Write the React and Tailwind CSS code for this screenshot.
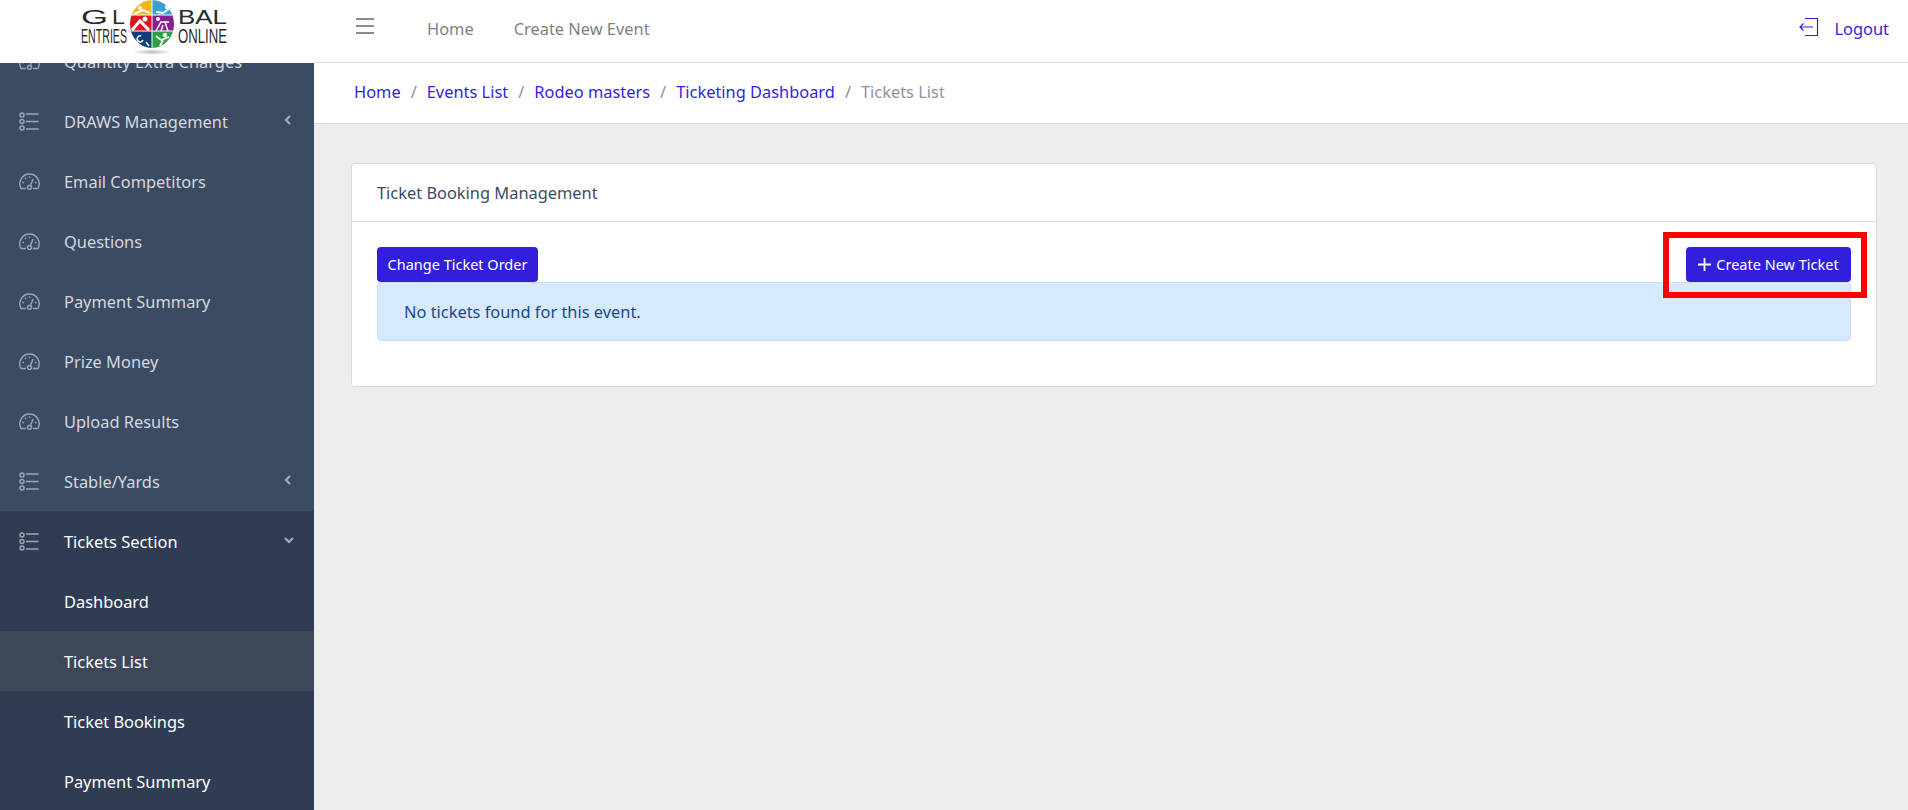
const font = "font-['Noto_Sans','Open_Sans',sans-serif]";

function ListIcon() {
  return (
    <svg width="20" height="19" viewBox="0 0 20 19" fill="none" stroke="#9da5b1" className="shrink-0">
      <circle cx="3" cy="3" r="2" strokeWidth="1.500" />
      <circle cx="3" cy="9.500" r="2" strokeWidth="1.500" />
      <circle cx="3" cy="16" r="2" strokeWidth="1.500" />
      <path d="M7 2h12.500M7 9.500h12.500M7 17h12.500" strokeWidth="1.400" />
    </svg>
  );
}

function GaugeIcon() {
  return (
    <svg width="21" height="17" viewBox="0 0 21 17" fill="none" stroke="#9da5b1" strokeWidth="1.400" className="shrink-0 mt-[1px]">
      <path d="M7 15.500H2A9.800 9.800 0 0 1 10.500 1 9.800 9.800 0 0 1 19 15.500h-5" />
      <circle cx="10.500" cy="14.500" r="2" />
      <path d="M11.500 12.500 14 6M3.500 9.500H5M6 5l1 1M10.500 3.500V5M16 9.500h1.500" />
    </svg>
  );
}

function Row({ icon, label, chevron, white, active, clip }) {
  return (
    <div className={`flex h-[60px] items-center ${active ? "bg-[#3c4758]" : ""} ${clip ? "-mt-[32px]" : ""}`}>
      <div className="flex w-[64px] pl-[19px]">{icon}</div>
      <span className={`pt-[2px] text-[16.4px] ${white ? "text-white" : "text-[#d5d8dd]"}`}>{label}</span>
      {chevron === "left" && (
        <svg width="8" height="10" viewBox="0 0 8 10" fill="none" stroke="#a9b0bb" strokeWidth="2" className="ml-auto mr-[22px] -mt-[3px]">
          <path d="M6 1 2 5l4 4" />
        </svg>
      )}
      {chevron === "down" && (
        <svg width="10" height="8" viewBox="0 0 10 8" fill="none" stroke="#a9b0bb" strokeWidth="2" className="ml-auto mr-[20px] -mt-[3px]">
          <path d="M1 2l4 4 4-4" />
        </svg>
      )}
    </div>
  );
}

function Logo() {
  return (
    <svg width="314" height="63" viewBox="0 0 314 63">
      <defs>
        <clipPath id="ball"><ellipse cx="152" cy="24" rx="22" ry="24" /></clipPath>
        <radialGradient id="shadow"><stop offset="0" stopColor="#bbb" /><stop offset="1" stopColor="#fff" /></radialGradient>
      </defs>
      <ellipse cx="152" cy="52" rx="20" ry="3" fill="url(#shadow)" />
      <g clipPath="url(#ball)">
        <rect x="130" y="0" width="22" height="15" fill="#f4b41a" />
        <rect x="152" y="0" width="23" height="15" fill="#3b9ed1" />
        <rect x="130" y="15" width="22" height="16" fill="#e2131c" />
        <rect x="152" y="15" width="23" height="16" fill="#8a1f8f" />
        <rect x="130" y="31" width="22" height="18" fill="#123f7a" />
        <rect x="152" y="31" width="23" height="18" fill="#2f9e44" />
        <path d="M152 0v48M130 15h44M130 31h44" stroke="#fff" strokeWidth="1" />
        <circle cx="140" cy="8" r="2" fill="#fff" />
        <path d="M134 14l9-4 7 3M156 12l7 1 6-4" stroke="#fff" strokeWidth="2" fill="none" />
        <circle cx="167" cy="7" r="2.200" fill="#fff" />
        <circle cx="145" cy="19" r="2.500" fill="#fff" />
        <path d="M132 30l8-9 9 9" stroke="#fff" strokeWidth="3" fill="none" />
        <circle cx="158" cy="19" r="2" fill="#fff" />
        <path d="M156 31l5-9h8M165 22l3 9M161 31l2-6" stroke="#fff" strokeWidth="1.500" fill="none" />
        <path d="M141 36a3 3 0 1 0 2 4M146 42l3 4" stroke="#fff" strokeWidth="1.500" fill="none" />
        <circle cx="165" cy="35" r="2.200" fill="#fff" />
        <path d="M156 36l5 4 8-3M160 46l3-6" stroke="#fff" strokeWidth="1.800" fill="none" />
      </g>
      <g fontFamily="'Liberation Sans', sans-serif" fill="#2a2a2a">
        <text x="81" y="24" fontSize="20" textLength="27" lengthAdjust="spacingAndGlyphs">G</text>
        <text x="112" y="24" fontSize="20" textLength="13" lengthAdjust="spacingAndGlyphs">L</text>
        <text x="178" y="24" fontSize="20" textLength="49" lengthAdjust="spacingAndGlyphs">BAL</text>
        <text x="81" y="43" fontSize="19.500" textLength="46" lengthAdjust="spacingAndGlyphs">ENTRIES</text>
        <text x="178" y="43" fontSize="19.500" textLength="49" lengthAdjust="spacingAndGlyphs">ONLINE</text>
      </g>
    </svg>
  );
}

function Crumb({ children }) {
  return <span className="text-[#321fdb]">{children}</span>;
}

function Sep() {
  return <span className="px-[10px] text-[#8a93a2]">/</span>;
}

export default function App() {
  return (
    <div className={`flex h-[810px] w-[1908px] flex-col overflow-hidden bg-[#ebedef] ${font}`}>
      <header className="z-10 flex h-[63px] shrink-0 items-center bg-white">
        <div className="w-[314px] shrink-0"><Logo /></div>
        <div className="flex h-[63px] w-full items-center border-b border-[#d8dbe0] pb-[4px] text-[16.4px] text-[#7d7f85]">
          <svg width="18" height="16" viewBox="0 0 18 16" fill="none" stroke="#8a8a8f" strokeWidth="2" className="ml-[42px] -mt-[6px]">
            <path d="M0 1h18M0 8h18M0 15h18" />
          </svg>
          <span className="ml-[53px]">Home</span>
          <span className="ml-[40px]">Create New Event</span>
          <div className="ml-auto mr-[19px] flex items-center text-[#321fdb]">
            <svg width="20" height="20" viewBox="0 0 20 20" fill="none" stroke="#321fdb" strokeWidth="1.200" className="-mt-[4px]">
              <path d="M6 1.500h12.500v17H6M1 10h13M4.500 6.500 1 10l3.500 3.500" />
            </svg>
            <span className="ml-[15px]">Logout</span>
          </div>
        </div>
      </header>

      <div className="flex min-h-0 flex-1">
        <aside className="w-[314px] shrink-0 overflow-hidden bg-[#3c4b64]">
          <Row clip icon={<GaugeIcon />} label="Quantity Extra Charges" />
          <Row icon={<ListIcon />} label="DRAWS Management" chevron="left" />
          <Row icon={<GaugeIcon />} label="Email Competitors" />
          <Row icon={<GaugeIcon />} label="Questions" />
          <Row icon={<GaugeIcon />} label="Payment Summary" />
          <Row icon={<GaugeIcon />} label="Prize Money" />
          <Row icon={<GaugeIcon />} label="Upload Results" />
          <Row icon={<ListIcon />} label="Stable/Yards" chevron="left" />
          <div className="bg-[#303c54]">
            <Row white icon={<ListIcon />} label="Tickets Section" chevron="down" />
            <Row white label="Dashboard" />
            <Row white active label="Tickets List" />
            <Row white label="Ticket Bookings" />
            <Row white label="Payment Summary" />
          </div>
        </aside>

        <main className="min-w-0 flex-1">
          <div className="flex h-[61px] items-center border-b border-[#d8dbe0] bg-white pb-[1px] pl-[40px] text-[16.4px]">
            <Crumb>Home</Crumb><Sep /><Crumb>Events List</Crumb><Sep /><Crumb>Rodeo masters</Crumb><Sep />
            <Crumb>Ticketing Dashboard</Crumb><Sep /><span className="text-[#8a93a2]">Tickets List</span>
          </div>
          <div className="pl-[37px] pr-[31px] pt-[39px]">
            <div className="rounded-[4px] border border-[#d8dbe0] bg-white">
              <div className="flex h-[58px] items-center border-b border-[#d8dbe0] pl-[25px] pt-[2px] text-[16.4px] text-[#3c4b64]">
                Ticket Booking Management
              </div>
              <div className="px-[25px] pb-[45px] pt-[25px]">
                <div className="flex justify-between">
                  <button className="flex h-[35px] w-[161px] items-center justify-center rounded-[4px] bg-[#321fdb] text-[14.500px] text-white">Change Ticket Order</button>
                  <div className="relative">
                    <button className="flex h-[35px] w-[165px] items-center justify-center rounded-[4px] bg-[#321fdb] text-[14.500px] text-white">
                      <svg width="13" height="13" viewBox="0 0 13 13" stroke="#fff" strokeWidth="1.800" className="mr-[5px]"><path d="M6.500 0v13M0 6.500h13" /></svg>
                      Create New Ticket
                    </button>
                    <div className="pointer-events-none absolute -bottom-[16px] -left-[23px] -right-[16px] -top-[15px] border-[6px] border-[#ff0000]" />
                  </div>
                </div>
                <div className="flex h-[59px] items-center rounded-[4px] border border-[#c6e0fb] bg-[#d6e9fe] pl-[26px] pt-[2px] text-[16.4px] text-[#1a4a84]">
                  No tickets found for this event.
                </div>
              </div>
            </div>
          </div>
        </main>
      </div>
    </div>
  );
}
